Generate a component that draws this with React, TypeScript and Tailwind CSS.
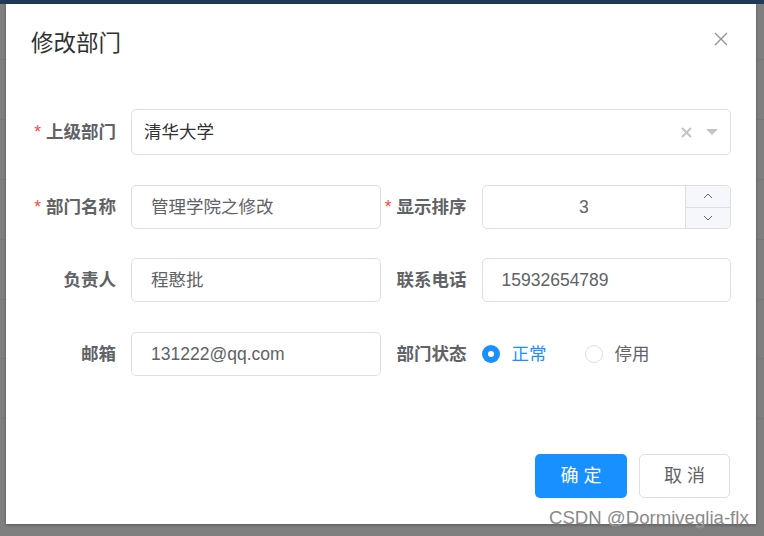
const font = "font-['Liberation_Sans','Noto_Sans_CJK_SC',sans-serif]";

const Label = ({ text, required }: { text: string; required?: boolean }) => (
  <div className="w-[100px] shrink-0 pr-[15px] flex justify-end items-center text-[17.5px] font-bold text-[#606266]">
    {required && <span className="text-[#ff4949] mr-[5px] font-normal">*</span>}
    {text}
  </div>
);

const TextInput = ({ value }: { value: string }) => (
  <div className="flex-1 h-full border border-[#dcdfe6] rounded-[5px] flex items-center pl-[19px] text-[17.5px] text-[#606266]">
    {value}
  </div>
);

const App = () => {
  return (
    <div className={`relative w-[764px] h-[536px] bg-[#7f7f7f] overflow-hidden ${font}`}>
      <div className="h-[4px] bg-[#1f3a5b]" />
      <div className="flex flex-col">
        <div className="h-[56px] border-b border-[#787878]" />
        <div className="h-[60px] border-b border-[#787878]" />
        <div className="h-[60px] border-b border-[#787878]" />
        <div className="h-[60px] border-b border-[#787878]" />
        <div className="h-[60px] border-b border-[#787878]" />
        <div className="h-[59px] border-b border-[#787878]" />
        <div className="h-[60px] border-b border-[#787878]" />
      </div>

      <div className="absolute left-[6px] top-[4px] w-[750px] h-[520px] bg-white shadow-[0_1px_3px_rgba(0,0,0,0.3)] flex flex-col px-[25px]">
        <div className="pt-[25px] flex items-center justify-between">
          <span className="text-[22.5px] leading-[30px] text-[#303133]">修改部门</span>
          <svg width="14" height="14" viewBox="0 0 14 14" className="mr-[3px] mt-[-10px]">
            <path d="M1 1L13 13M13 1L1 13" stroke="#909399" strokeWidth="1.4" />
          </svg>
        </div>

        <div className="mt-[50px] flex h-[46px]">
          <Label text="上级部门" required />
          <div className="flex-1 h-full border border-[#dcdfe6] rounded-[5px] flex items-center pl-[12px] pr-[12px] text-[17.5px] text-[#303133]">
            <span className="flex-1">清华大学</span>
            <svg width="11" height="11" viewBox="0 0 11 11" className="mr-[14px]">
              <path d="M1 1L10 10M10 1L1 10" stroke="#c0c4cc" strokeWidth="2" />
            </svg>
            <svg width="12" height="7" viewBox="0 0 12 7">
              <path d="M0 0H12L6 6Z" fill="#c0c4cc" />
            </svg>
          </div>
        </div>

        <div className="mt-[30px] grid grid-cols-2 gap-x-[1px] h-[44px]">
          <div className="flex h-[44px]">
            <Label text="部门名称" required />
            <TextInput value="管理学院之修改" />
          </div>
          <div className="flex h-[44px]">
            <Label text="显示排序" required />
            <div className="flex-1 h-full border border-[#dcdfe6] rounded-[5px] flex overflow-hidden">
              <div className="flex-1 flex items-center justify-center text-[17.5px] text-[#606266]">3</div>
              <div className="w-[45px] border-l border-[#dcdfe6] bg-[#f5f7fa] flex flex-col">
                <div className="flex-1 flex items-center justify-center border-b border-[#dcdfe6]">
                  <svg width="10" height="6" viewBox="0 0 10 6">
                    <path d="M1 5L5 1L9 5" stroke="#606266" strokeWidth="1" fill="none" />
                  </svg>
                </div>
                <div className="flex-1 flex items-center justify-center">
                  <svg width="10" height="6" viewBox="0 0 10 6">
                    <path d="M1 1L5 5L9 1" stroke="#606266" strokeWidth="1" fill="none" />
                  </svg>
                </div>
              </div>
            </div>
          </div>
        </div>

        <div className="mt-[29px] grid grid-cols-2 gap-x-[1px] h-[44px]">
          <div className="flex h-[44px]">
            <Label text="负责人" />
            <TextInput value="程憨批" />
          </div>
          <div className="flex h-[44px]">
            <Label text="联系电话" />
            <TextInput value="15932654789" />
          </div>
        </div>

        <div className="mt-[30px] grid grid-cols-2 gap-x-[1px] h-[44px]">
          <div className="flex h-[44px]">
            <Label text="邮箱" />
            <TextInput value="131222@qq.com" />
          </div>
          <div className="flex h-[44px]">
            <Label text="部门状态" />
            <div className="flex items-center text-[17.5px]">
              <span className="w-[18px] h-[18px] rounded-full bg-[#1890ff] flex items-center justify-center">
                <span className="w-[6px] h-[6px] rounded-full bg-white" />
              </span>
              <span className="ml-[12px] text-[#1890ff]">正常</span>
              <span className="ml-[38px] w-[18px] h-[18px] rounded-full border border-[#dcdfe6]" />
              <span className="ml-[12px] text-[#606266]">停用</span>
            </div>
          </div>
        </div>

        <div className="mt-[78px] flex justify-end gap-[12px] pr-[1px]">
          <button className="w-[92px] h-[44px] rounded-[5px] bg-[#1890ff] text-white text-[18px] tracking-[5px] pl-[5px]">确定</button>
          <button className="w-[91px] h-[44px] rounded-[5px] border border-[#dcdfe6] bg-white text-[#606266] text-[18px] tracking-[5px] pl-[5px]">取消</button>
        </div>
      </div>

      <div className="absolute left-[549px] top-[504px] text-[18.6px] text-[#8a8a8a] [text-shadow:0_0_1px_rgba(255,255,255,0.6)]">
        CSDN @Dormiveglia-flx
      </div>
    </div>
  );
};

export default App;
